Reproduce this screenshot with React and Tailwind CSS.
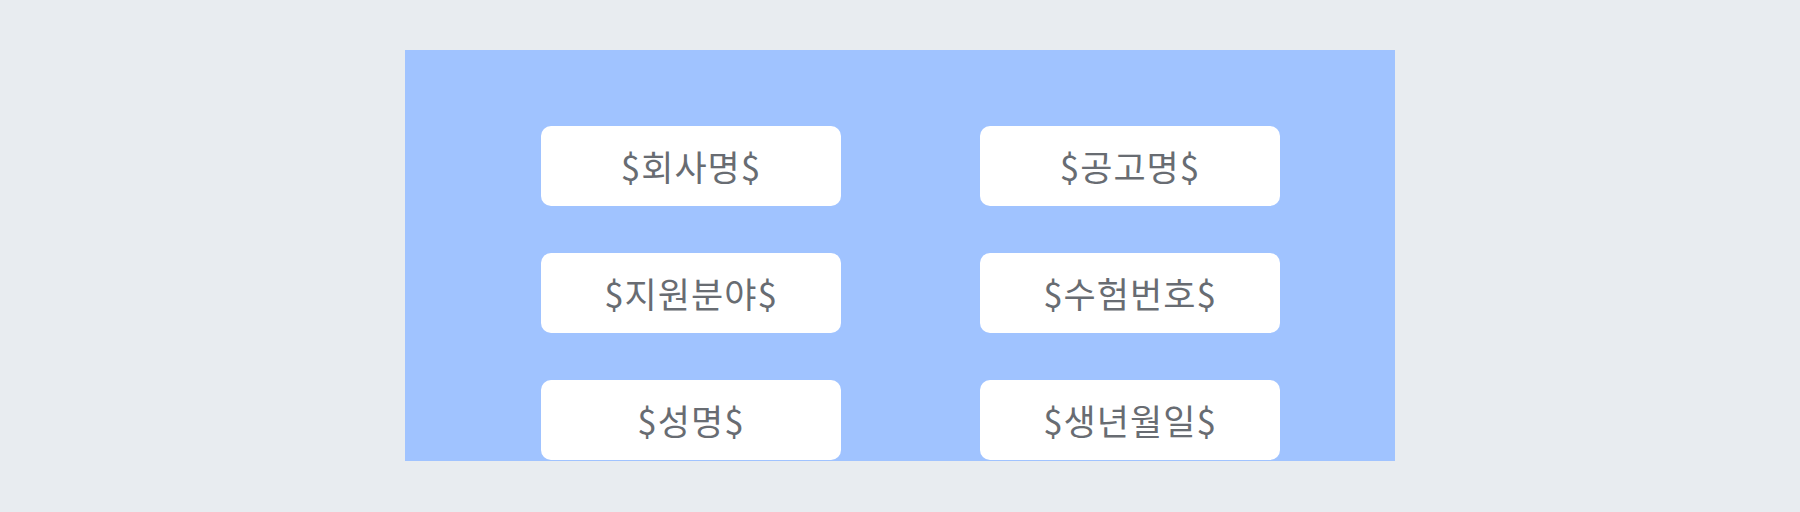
const FIELDS = ["$회사명$", "$공고명$", "$지원분야$", "$수험번호$", "$성명$", "$생년월일$"];

export default function App() {
  return (
    <div className="w-[1800px] h-[512px] bg-[#e8ecf0] pt-[50px] pl-[405px]">
      <div className="w-[990px] h-[411px] bg-[#a0c3ff] overflow-hidden pt-[76px] pl-[136px]">
        <div className="grid grid-cols-[300px_300px] gap-x-[139px] gap-y-[47px]">
          {FIELDS.map((f) => (
            <div
              key={f}
              className="h-[80px] bg-white rounded-[10px] flex items-center justify-center text-[35px] tracking-[1px] text-[#686c72] font-['Noto_Sans_CJK_KR',sans-serif]"
            >
              {f}
            </div>
          ))}
        </div>
      </div>
    </div>
  );
}
